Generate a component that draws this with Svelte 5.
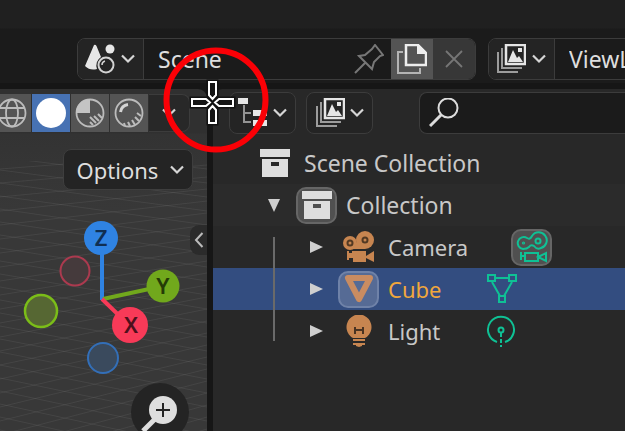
<script>
  let sceneName = $state('Scene');
  let layerName = $state('ViewLayer');
  let query = $state('');
  let shading = $state('solid');

  const modes = ['wireframe', 'solid', 'material', 'rendered'];
  const objects = [
    { name: 'Camera', kind: 'camera' },
    { name: 'Cube', kind: 'mesh' },
    { name: 'Light', kind: 'light' },
  ];
  let selected = $state('Cube');

  const falling = Array.from({ length: 26 }, (_, i) => ({ a: 42 + i * 13, b: 66 + i * 14 }));
  const rising = Array.from({ length: 26 }, (_, i) => ({ a: 80 + i * 14, b: 64 + i * 12 }));
</script>

{#snippet chevron()}
  <svg class="chev" width="16" height="12" viewBox="0 0 16 12" aria-hidden="true">
    <path d="M2 2.500 8 8.500 14 2.500" fill="none" stroke="#d6d6d6" stroke-width="2.2" />
  </svg>
{/snippet}

{#snippet layersIcon()}
  <svg width="30" height="30" viewBox="0 0 30 30" aria-hidden="true">
    <path d="M2 8V28H22M6 4V24H26" fill="none" stroke="#9c9c9c" stroke-width="2" />
    <rect x="10" y="1" width="19" height="19" fill="#242424" stroke="#e6e6e6" stroke-width="2.5" />
    <path d="M12 18 17 6 21 14 23 12 27 18Z" fill="#e6e6e6" />
    <rect x="22" y="4" width="4" height="4" fill="#e6e6e6" />
  </svg>
{/snippet}

{#snippet boxIcon()}
  <svg width="30" height="28" viewBox="0 0 30 28" aria-hidden="true">
    <path d="M0 0H30V8H0ZM2 10H28V28H2ZM11 13V17H19V13Z" fill="#dedede" fill-rule="evenodd" />
  </svg>
{/snippet}

<div class="app">
  <header class="topbar">
    <div class="field scene">
      <button class="pick" aria-label="Browse scene">
        <svg width="30" height="30" viewBox="0 0 30 30" aria-hidden="true">
          <path d="M9 1Q10.500 0 11.500 2L16 13A10 10 0 0 0 12 25Q5 27 0 22Z" fill="#e6e6e6" />
          <circle cx="25" cy="5" r="4.500" fill="#e6e6e6" />
          <circle cx="21" cy="21" r="7.500" fill="#242424" stroke="#d2d2d2" stroke-width="2" />
          <path d="M17 21A4 4 0 0 1 20 17" fill="none" stroke="#d2d2d2" stroke-width="1.500" />
        </svg>
        {@render chevron()}
      </button>
      <input class="name" aria-label="Scene name" bind:value={sceneName} />
      <button class="pin" aria-label="Pin scene">
        <svg width="30" height="30" viewBox="0 0 30 30" aria-hidden="true">
          <path d="M1 29 12 18M5 12 18 25 20 18 26 12 29 11 21 1 18 5 11 11Z" fill="none" stroke="#777" stroke-width="2" />
        </svg>
      </button>
      <button class="tool copy" aria-label="New scene">
        <svg width="30" height="30" viewBox="0 0 30 30" aria-hidden="true">
          <path d="M6 8H1V29H23V24" fill="none" stroke="#b4b4b4" stroke-width="2" />
          <path d="M9 1H21L29 9V21H9Z" fill="none" stroke="#eee" stroke-width="2.5" />
          <path d="M20 1V10H29Z" fill="#eee" />
        </svg>
      </button>
      <button class="tool close" aria-label="Remove scene">
        <svg width="18" height="18" viewBox="0 0 18 18" aria-hidden="true">
          <path d="M1 1 17 17M17 1 1 17" stroke="#767676" stroke-width="1.800" />
        </svg>
      </button>
    </div>
    <div class="field layer">
      <button class="pick" aria-label="Browse view layer">{@render layersIcon()}{@render chevron()}</button>
      <input class="name" aria-label="View layer name" bind:value={layerName} />
    </div>
  </header>

  <main>
    <section class="viewport" aria-label="3D viewport">
      <svg class="floor" viewBox="0 0 207 342" preserveAspectRatio="none" aria-hidden="true">
        {#each falling as l}<path d="M0 {l.a}L207 {l.b}" />{/each}
        {#each rising as l}<path d="M0 {l.a}L207 {l.b}" />{/each}
      </svg>
      <div class="modes">
        {#each modes as mode}
          <button class="mode" aria-label={mode} aria-pressed={shading === mode} onclick={() => (shading = mode)}>
            <svg width="30" height="30" viewBox="0 0 30 30" aria-hidden="true" fill="none" stroke="#bcbcbc" stroke-width="1.800">
              {#if mode === 'wireframe'}
                <circle cx="15" cy="15" r="13.500" />
                <ellipse cx="15" cy="15" rx="6" ry="13.500" />
                <path d="M3 10H27M3 20H27" />
              {:else if mode === 'solid'}
                <circle cx="15" cy="15" r="15" fill="#fff" stroke="none" />
              {:else if mode === 'material'}
                <circle cx="15" cy="15" r="13.500" />
                <path d="M15 15V1A14 14 0 0 0 1 15Z" fill="#c4c4c4" stroke="none" />
                <path d="M15 19 21 25M19 18 24 23M23 16 27 20M15 24 18 27" stroke-width="2" />
              {:else}
                <circle cx="15" cy="15" r="13.500" />
                <path d="M6.500 14A9 9 0 0 1 14 6.500" stroke="#d4d4d4" stroke-width="3" />
                <path d="M10 25 11 28M14 24 16 28M18 22 21 27M21 19 25 23M23 15 27 18" stroke-width="2" />
              {/if}
            </svg>
          </button>
        {/each}
        <button class="more" aria-label="Shading options">{@render chevron()}</button>
      </div>
      <button class="options">Options {@render chevron()}</button>
      <svg class="gizmo" width="160" height="158" viewBox="0 0 160 158" role="img" aria-label="View axes">
        <g stroke-width="4">
          <path d="M79 79V20" stroke="#2f83e3" />
          <path d="M80 78 140 65" stroke="#71a81c" />
          <path d="M79 78 107 105" stroke="#f83a58" />
        </g>
        <circle cx="52" cy="50" r="14.500" fill="#453a3c" stroke="#ac3a4f" stroke-width="2" />
        <circle cx="18" cy="90" r="16" fill="#566733" stroke="#7bbd18" stroke-width="2.500" />
        <circle cx="80" cy="137" r="15" fill="#3a4a5d" stroke="#336fb8" stroke-width="2" />
        <circle cx="78" cy="17" r="17" fill="#2f83e3" />
        <circle cx="140" cy="65" r="16.500" fill="#71a81c" />
        <circle cx="107" cy="104" r="18" fill="#f83a58" />
        <text x="78" y="25" fill="#102f52">Z</text>
        <text x="140" y="73" fill="#253b06">Y</text>
        <text x="108" y="112" fill="#4e101c">X</text>
      </svg>
      <button class="sidebar-tab" aria-label="Show sidebar">
        <svg width="10" height="16" viewBox="0 0 10 16" aria-hidden="true">
          <path d="M8.500 1 2 8 8.500 15" fill="none" stroke="#bbb" stroke-width="2" />
        </svg>
      </button>
      <button class="zoom" aria-label="Zoom view">
        <svg width="58" height="58" viewBox="0 0 58 58" aria-hidden="true">
          <path d="M24 36 12 48" stroke="#dedede" stroke-width="5" />
          <circle cx="32" cy="27" r="14" fill="#dedede" />
          <path d="M32 20V34M25 27H39" stroke="#222" stroke-width="2" />
        </svg>
      </button>
    </section>

    <section class="outliner" aria-label="Outliner">
      <div class="bar">
        <button class="menu" aria-label="Editor type">
          <svg width="30" height="30" viewBox="0 0 30 30" aria-hidden="true">
            <path d="M6 7V24H13M6 15H13" fill="none" stroke="#949494" stroke-width="2" />
            <path d="M0 0H10V6H0ZM15 12H29V18H15ZM15 22H29V28H15Z" fill="#e6e6e6" />
          </svg>
          {@render chevron()}
        </button>
        <button class="menu" aria-label="Display mode">{@render layersIcon()}{@render chevron()}</button>
        <label class="search">
          <svg width="30" height="30" viewBox="0 0 30 30" aria-hidden="true">
            <circle cx="19" cy="10" r="9.500" fill="none" stroke="#dcdcdc" stroke-width="2" />
            <path d="M12 17 1 28" stroke="#dcdcdc" stroke-width="3" />
          </svg>
          <input aria-label="Filter" bind:value={query} />
        </label>
      </div>
      <ul class="tree">
        <li class="row root">{@render boxIcon()}<span>Scene Collection</span></li>
        <li class="row coll">
          <button class="fold" aria-label="Collapse Collection">
            <svg width="12" height="13" viewBox="0 0 12 13" aria-hidden="true"><path d="M0 0H12L6 13Z" fill="#cfcfcf" /></svg>
          </button>
          <span class="chip">{@render boxIcon()}</span><span>Collection</span>
        </li>
        <li>
          <ul class="children">
            {#each objects as o}
              <li class="row item" class:selected={selected === o.name}>
                <button class="fold" aria-label="Expand {o.name}">
                  <svg width="13" height="12" viewBox="0 0 13 12" aria-hidden="true"><path d="M0 0V12L13 6Z" fill="#cfcfcf" /></svg>
                </button>
                <span class="chip" class:plain={o.kind !== 'mesh'}>
                  <svg width="32" height="32" viewBox="0 0 32 32" aria-hidden="true">
                    {#if o.kind === 'camera'}
                      <circle cx="7" cy="12" r="7" fill="#c78550" />
                      <circle cx="22" cy="9" r="9" fill="#c78550" />
                      <path d="M7 12H22V18H7Z" fill="#c78550" />
                      <g fill="none" stroke="#523923" stroke-width="2"><circle cx="7" cy="12" r="2.500" /><circle cx="22" cy="9" r="2.500" /></g>
                      <path d="M4 20H6V22H9V20H23V25L31 20V31L23 27V31H10V27H6V29H4Z" fill="#c78550" />
                    {:else if o.kind === 'mesh'}
                      <path d="M5 5H27L16 26Z" fill="none" stroke="#c98c61" stroke-width="6" stroke-linejoin="round" />
                    {:else}
                      <path d="M10 23A12.500 12.500 0 1 1 22 23Z" fill="#c78550" />
                      <path d="M12 19V13H11M20 19V13H21M12 15H20" fill="none" stroke="#493322" stroke-width="2" />
                      <path d="M10 25H22M10 29H22" stroke="#c78550" stroke-width="2" />
                      <path d="M13 29H19V31L16 32 13 31Z" fill="#c78550" />
                    {/if}
                  </svg>
                </span>
                <button class="label" onclick={() => (selected = o.name)}>{o.name}</button>
                <span class="data" class:chip={o.kind === 'camera'}>
                  <svg width="32" height="32" viewBox="0 0 32 32" aria-hidden="true" fill="none" stroke="#0fc195" stroke-width="2">
                    {#if o.kind === 'camera'}
                      <path d="M7 18A6 6 0 1 1 11 7Q14 9 16 5A8 8 0 1 1 25 17Q21 19 18 15Q15 13 13 16 11 18 7 18Z" />
                      <circle cx="22" cy="10" r="2.500" /><circle cx="7.500" cy="12" r=".6" />
                      <path d="M5 21V29M5 25H9M9 22H22V30H9ZM22 26 30 22V30Z" />
                    {:else if o.kind === 'mesh'}
                      <path d="M9 5H23M6 9 14 23M26 9 18 23" />
                      <path d="M2 2H9V8H2ZM23 2H30V8H23ZM13 23H19V29H13Z" />
                    {:else}
                      <path d="M11 27A13 13 0 1 1 19 27" />
                      <circle cx="15" cy="15" r="2.500" />
                      <path d="M15 18V32" stroke-dasharray="4 2" />
                    {/if}
                  </svg>
                </span>
              </li>
            {/each}
          </ul>
        </li>
      </ul>
    </section>
  </main>

  <svg class="marker" width="106" height="108" viewBox="0 0 106 108" aria-hidden="true">
    <g fill="#151515" stroke="#111" stroke-width="5">
      <path d="M46 36H53V49L49.500 53 46 49ZM46 77H53V64L49.500 60 46 64ZM29 53H43L47 56.500 43 60H29ZM70 53H56L52 56.500 56 60H70Z" />
    </g>
    <g fill="#151515" stroke="#fff" stroke-width="2">
      <path d="M46 36H53V49L49.500 53 46 49ZM46 77H53V64L49.500 60 46 64ZM29 53H43L47 56.500 43 60H29ZM70 53H56L52 56.500 56 60H70Z" />
    </g>
    <circle cx="53" cy="54" r="49.500" fill="none" stroke="#fb0006" stroke-width="6" />
  </svg>
</div>

<style>
  :global(body) { margin: 0; background: #161616; }
  .app {
    position: relative; display: flex; flex-direction: column; height: 100vh; overflow: hidden;
    color: #c8c8c8; font: 23px/32px "Noto Sans", "Open Sans", sans-serif;
  }
  button, input { font: inherit; color: inherit; background: none; border: 0; padding: 0; margin: 0; min-width: 0; box-sizing: border-box; }
  button { display: flex; align-items: center; justify-content: center; flex: none; }
  input { outline: 0; }
  svg { flex: none; display: block; }
  ul { list-style: none; margin: 0; padding: 0; }

  .topbar {
    display: flex; gap: 12px; padding: 38px 0 3px 77px; border-bottom: 6px solid #161616;
    background: linear-gradient(#202020 28px, #1b1b1b 29px);
  }
  .field { display: flex; flex: none; height: 42px; box-sizing: border-box; border: 1px solid #3c3c3c; border-radius: 8px; background: #1b1b1b; overflow: hidden; }
  .scene { width: 399px; }
  .layer { width: 320px; }
  .pick { width: 66px; gap: 5px; background: #242424; border-right: 1px solid #3c3c3c; }
  .name { flex: 1; padding: 0 14px; color: #dedede; }
  .pin { width: 44px; }
  .tool { width: 42px; }
  .copy { background: #545454; }
  .close { background: #373737; }

  main { display: flex; flex: 1; min-height: 0; }
  .viewport {
    position: relative; width: 207px; flex: none; overflow: hidden; border-radius: 0 9px 0 0;
    background: linear-gradient(#303030 44px, #333 45px, #383838 120px);
  }
  .floor { position: absolute; inset: 0; width: 100%; height: 100%; stroke: #888; stroke-opacity: .16; clip-path: inset(72px 0 0); }
  .modes { position: relative; display: flex; justify-content: flex-end; gap: 1px; padding: 5px 17px 0 0; }
  .mode { width: 38px; height: 38px; background: #545454; }
  .mode[aria-pressed='true'] { background: #4772b3; }
  .more { width: 41px; background: #282828; border: 1px solid #3c3c3c; border-left: 0; border-radius: 0 8px 8px 0; }
  .options {
    position: relative; margin: 17px 14px 0 auto; padding-left: 6px; width: 130px; height: 41px; gap: 11px;
    color: #dedede; background: #242424; border: 1px solid #3e3e3e; border-radius: 8px; font-size: 22px;
  }
  .gizmo { position: absolute; left: 23px; top: 132px; }
  .gizmo text { font-size: 22px; font-weight: 600; text-anchor: middle; }
  .sidebar-tab { position: absolute; right: 0; top: 136px; width: 17px; height: 30px; background: #2b2b2b; border-radius: 9px 0 0 9px; }
  .zoom { position: absolute; left: 131px; top: 294px; width: 58px; height: 58px; border-radius: 50%; background: #242424; }

  .outliner { flex: 1; min-width: 0; margin-left: 6px; background: #282828; border-radius: 9px 0 0 0; overflow: hidden; }
  .bar { display: flex; gap: 10px; padding: 3px 0 7px 16px; }
  .menu { width: 67px; height: 42px; gap: 4px; background: #242424; border: 1px solid #3c3c3c; border-radius: 8px; }
  .search {
    display: flex; flex: 1; align-items: center; gap: 8px; margin-left: 36px; padding-left: 9px;
    background: #1b1b1b; border: 1px solid #3c3c3c; border-right: 0; border-radius: 8px 0 0 8px;
  }
  .search input { flex: 1; }
  .row { display: flex; align-items: center; height: 42px; }
  .row:nth-child(even) { background: #2b2b2b; }
  .root { padding-left: 47px; gap: 14px; }
  .coll { padding-left: 49px; }
  .fold { width: 24px; height: 24px; }
  .chip { display: flex; align-items: center; justify-content: center; flex: none; width: 41px; height: 37px; margin: 0 9px 0 10px; box-sizing: border-box; background: #505050; border: 2px solid #666; border-radius: 10px; }
  .chip.plain { background: none; border-color: transparent; }
  .tree { padding-top: 1px; }
  .children { position: relative; }
  .children::before { content: ''; position: absolute; left: 60px; top: 11px; bottom: 11px; width: 2px; background: #6a6a6a; }
  .item { padding-left: 91px; font-size: 22px; }
  .item.selected { background: #334d80; }
  .selected .label { color: #f0a73c; }
  .selected .chip { background: #566b95; border-color: #6f82a8; }
  .label { width: 98px; justify-content: flex-start; }
  .data { margin: 0; }
  .data.chip { margin: 0 0 0 25px; }
  .marker { position: absolute; left: 163px; top: 46px; pointer-events: none; }
</style>
